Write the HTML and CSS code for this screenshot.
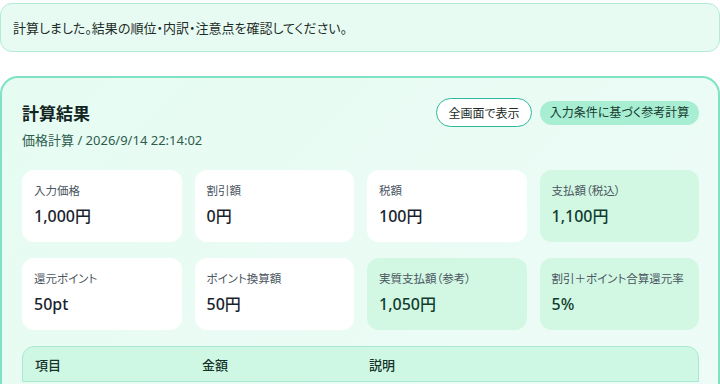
FILE: index.html
```html
<!DOCTYPE html>
<html lang="ja">
<head>
    <meta charset="utf-8">
    <meta name="viewport" content="width=device-width, initial-scale=1">
    <title>計算結果</title>
    <link rel="stylesheet" href="styles.css">
</head>
<body>
    <div class="notice">計算しました。結果の順位・内訳・注意点を確認してください。</div>

    <div class="result">
        <div class="result-head">
            <h2 class="title">計算結果</h2>
            <div class="actions">
                <button class="btn-outline">全画面で表示</button>
                <span class="badge">入力条件に基づく参考計算</span>
            </div>
        </div>
        <div class="sub">価格計算 / 2026/9/14 22:14:02</div>

        <div class="stats">
            <div class="stat">
                <div class="label">入力価格</div>
                <div class="value">1,000円</div>
            </div>
            <div class="stat">
                <div class="label">割引額</div>
                <div class="value">0円</div>
            </div>
            <div class="stat">
                <div class="label">税額</div>
                <div class="value">100円</div>
            </div>
            <div class="stat hl">
                <div class="label">支払額（税込）</div>
                <div class="value">1,100円</div>
            </div>
            <div class="stat">
                <div class="label">還元ポイント</div>
                <div class="value">50pt</div>
            </div>
            <div class="stat">
                <div class="label">ポイント換算額</div>
                <div class="value">50円</div>
            </div>
            <div class="stat hl">
                <div class="label">実質支払額（参考）</div>
                <div class="value">1,050円</div>
            </div>
            <div class="stat hl">
                <div class="label">割引＋ポイント合算還元率</div>
                <div class="value">5%</div>
            </div>
        </div>

        <div class="table">
            <div class="thead">
                <div>項目</div>
                <div>金額</div>
                <div>説明</div>
            </div>
        </div>
    </div>
</body>
</html>
```

FILE: styles.css
```css
body {
    margin: 0;
    padding: 3px 0 0;
    width: 720px;
    font-family: "Noto Sans", "Noto Sans CJK JP", sans-serif;
    font-feature-settings: "palt";
    color: #1b2a25;
    background: #ffffff;
}

.notice {
    background: #e8fbf3;
    border: 1px solid #b3ebd7;
    border-radius: 12px;
    padding: 14px 12px 13px;
    font-size: 13px;
    line-height: 20px;
    color: #1f2d28;
    width: 694px;
}

.result {
    margin-top: 24px;
    border: 2px solid #7fe2c4;
    border-radius: 18px;
    background: linear-gradient(135deg, #e6fcf2, #eefbf7);
    padding: 20px 19px 0 20px;
    height: 310px;
    overflow: hidden;
}

.result-head {
    display: flex;
    justify-content: space-between;
    align-items: center;
    height: 29px;
}

.title {
    margin: 0;
    font-size: 17px;
    font-weight: 700;
    color: #14251f;
}

.actions {
    display: flex;
    align-items: center;
    gap: 8px;
}

.btn-outline {
    font-family: inherit;
    font-feature-settings: inherit;
    font-size: 12px;
    color: #1b2a25;
    background: #ffffff;
    border: 1px solid #2eb89b;
    border-radius: 15px;
    height: 29px;
    width: 96px;
    padding: 0;
    cursor: pointer;
}

.badge {
    background: #a8eed3;
    color: #173a2f;
    font-size: 12px;
    border-radius: 12px;
    height: 24px;
    line-height: 24px;
    width: 159px;
    text-align: center;
    white-space: nowrap;
}

.sub {
    margin-top: 4px;
    font-size: 13px;
    line-height: 18px;
    color: #2e5d4e;
}

.stats {
    display: grid;
    grid-template-columns: repeat(4, 1fr);
    column-gap: 13px;
    row-gap: 16px;
    margin-top: 21px;
}

.stat {
    background: #ffffff;
    border-radius: 12px;
    padding: 13px 12px 15px;
}

.stat.hl {
    background: #d2f8e4;
}

.label {
    font-size: 11.5px;
    line-height: 16px;
    color: #4a5560;
    margin-bottom: 6px;
    white-space: nowrap;
}

.value {
    font-size: 16px;
    line-height: 22px;
    font-weight: 500;
    color: #1a1f2e;
}

.stat.hl .value {
    color: #103d2e;
}

.table {
    margin-top: 16px;
    border: 1px solid #a9e9d1;
    border-radius: 12px 12px 0 0;
    background: #cff8e4;
}

.thead {
    display: grid;
    grid-template-columns: 167px 167px 1fr;
    padding: 9px 12px 7px;
    font-size: 13px;
    line-height: 18px;
    font-weight: 500;
    color: #15332a;
}
```
